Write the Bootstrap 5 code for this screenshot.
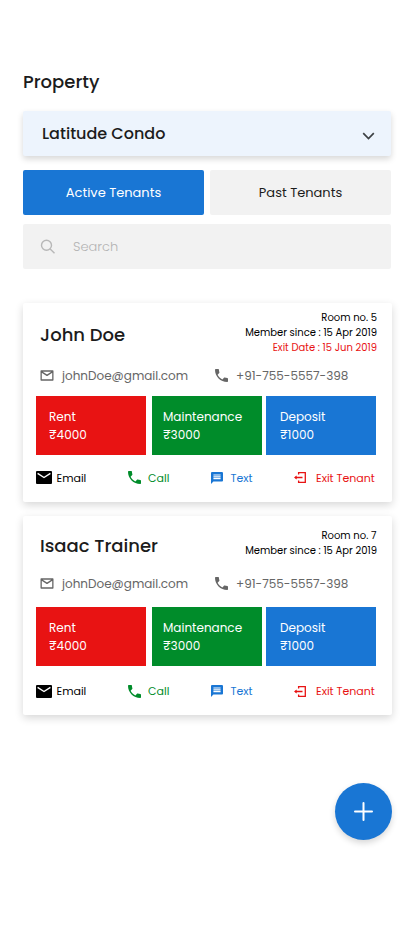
<!DOCTYPE html>
<html lang="en">
<head>
<meta charset="utf-8">
<meta name="viewport" content="width=device-width, initial-scale=1">
<title>Property tenants</title>
<link href="https://cdn.jsdelivr.net/npm/bootstrap@5.3.0/dist/css/bootstrap.min.css" rel="stylesheet">
<style>
body{font-family:Poppins,Inter,"Open Sans",sans-serif;color:#1c1c1c;background:#fff;min-height:931px}
.page-wrap{padding:69px 22px 0 23px}
.page-title{font-size:18px;font-weight:500;line-height:26px;height:42px}
.select-box{width:368px;height:45px;padding:0 16px 0 19px;background:#edf4fd;border-radius:2px;box-shadow:0 3px 6px rgba(0,0,0,.16);font-size:16px;font-weight:500}
.tabs-row{width:368px;gap:6px;margin-top:14px}
.tab-btn{height:45px;width:181px;border-radius:2px;border:0;padding:0;background:#f2f2f2;color:#1c1c1c;font-size:13px}
.tab-btn.active{background:#1976d4;color:#fff}
.search-box{width:368px;height:45px;margin-top:9px;padding-left:17px;background:#f2f2f2;border-radius:2px;color:#b4b4b4;font-size:13px;font-weight:300;gap:17px}
.tenant{width:369px;height:199px;border:0;border-radius:2px;box-shadow:0 3px 8px rgba(0,0,0,.16)}
.tenant-first{margin-top:34px}
.tenant-next{margin-top:14px}
.tenant-head{height:61px;padding:7px 15px 0 17px}
.tenant-next .tenant-head{height:56px;padding-top:12px}
.tenant-name{font-size:18px;font-weight:500;line-height:26px;margin-top:12px}
.tenant-next .tenant-name{margin-top:5px}
.tenant-meta{font-size:10px;line-height:15px;color:#000}
.contact{height:24px;padding-left:17px;font-size:12px;color:#666}
.contact-mail{width:175px;gap:8px}
.contact-tel{gap:8px}
.tiles{margin-top:8px;padding-left:13px}
.tenant-next .tiles{margin-top:11px}
.tile{width:110px;height:59px;padding:12px 0 0 13px;color:#fff;font-size:12px;line-height:18px}
.tenant-next .contact{height:25px}
.tile-mid{margin:0 4px 0 6px;padding-left:11px}
.tile-end{padding-left:14px}
.red-bg{background:#e81313}.green-bg{background:#008c2a}.blue-bg{background:#1976d4}
.actions{height:46px;padding-left:13px;font-size:11px;color:#000}
.tenant-next .actions{height:49px;padding-top:2px}
.contact svg,.actions svg{margin-bottom:1px}
.act-mail{width:92px;gap:4.500px}
.act-call{width:83px;gap:7px}
.act-text{width:83px;gap:7.500px}
.act-exit{gap:10px}
.green{color:#008c2a}.blue{color:#1976d4}.red{color:#e81313}
.fab{width:57px;height:57px;margin:68px 0 0 312px;border-radius:50%;background:#1976d4;box-shadow:0 3px 6px rgba(0,0,0,.16)}
svg{display:block;flex:none}
</style>
<script src="https://cdn.jsdelivr.net/npm/bootstrap@5.3.0/dist/js/bootstrap.bundle.min.js"></script>
</head>
<body>
<svg width="0" height="0" class="position-absolute" aria-hidden="true">
<symbol id="mail" viewBox="0 0 14 11"><path fill="none" stroke="currentColor" stroke-width="1.300" stroke-linejoin="round" d="M1.150 1h11.700v9H1.150zM1.300 1.600 7 5.400l5.700-3.800"/></symbol>
<symbol id="mail-fill" viewBox="0 0 16 13"><rect width="16" height="13" rx="1" fill="currentColor"/><path d="M1.600 2.300 8 6.500l6.400-4.200" fill="none" stroke="#fff" stroke-width="1.400"/></symbol>
<symbol id="phone" viewBox="3 3 18 18"><path fill="currentColor" d="M6.620 10.790c1.440 2.830 3.760 5.140 6.590 6.590l2.200-2.200c.27-.27.67-.36 1.020-.24 1.120.37 2.330.57 3.570.57.55 0 1 .45 1 1V20c0 .55-.45 1-1 1-9.390 0-17-7.610-17-17 0-.55.45-1 1-1h3.500c.55 0 1 .45 1 1 0 1.250.2 2.450.57 3.570.11.35.03.74-.25 1.020l-2.200 2.200z"/></symbol>
<symbol id="chat" viewBox="2 2 20 20"><path fill="currentColor" d="M20 2H4c-1.100 0-2 .9-2 2v18l4-4h14c1.100 0 2-.9 2-2V4c0-1.100-.9-2-2-2zM6 9h12v2H6V9zm12 5H6v-2h12v2zm0-6H6V6h12v2z"/></symbol>
<symbol id="leave" viewBox="0 0 12 11"><path fill="none" stroke="currentColor" stroke-width="1.300" d="M4.600 2.600V.7h6.700v9.600H4.600V8.400M1 5.500h7.500"/><path fill="currentColor" d="M0 5.500 2.700 3.400v4.200z"/></symbol>
</svg>
<main class="page-wrap">
<h1 class="page-title mb-0">Property</h1>
<div class="select-box d-flex align-items-center justify-content-between">
<span>Latitude Condo</span>
<svg width="13" height="8" viewBox="0 0 13 8" class="mt-1"><path d="M1.200 1.200 6.500 6.500l5.300-5.300" fill="none" stroke="#3c4043" stroke-width="1.700"/></svg>
</div>
<div class="tabs-row d-flex">
<button type="button" class="tab-btn active">Active Tenants</button>
<button type="button" class="tab-btn">Past Tenants</button>
</div>
<div class="search-box d-flex align-items-center">
<svg width="16" height="16" viewBox="0 0 16 16"><g fill="none" stroke="#b8b8b8" stroke-width="1.400"><circle cx="6.500" cy="6.300" r="5"/><path d="m10.200 10 4.300 4.300"/></g></svg>
<span>Search</span>
</div>

<section class="card tenant tenant-first">
<div class="tenant-head d-flex justify-content-between">
<h2 class="tenant-name mb-0">John Doe</h2>
<div class="tenant-meta text-end"><div>Room no. 5</div><div>Member since : 15 Apr 2019</div><div class="red">Exit Date : 15 Jun 2019</div></div>
</div>
<div class="contact d-flex align-items-center">
<div class="contact-mail d-flex align-items-center"><svg width="14" height="11"><use href="#mail"/></svg><span>johnDoe@gmail.com</span></div>
<div class="contact-tel d-flex align-items-center"><svg width="13" height="13"><use href="#phone"/></svg><span>+91-755-5557-398</span></div>
</div>
<div class="tiles d-flex">
<div class="tile red-bg"><div>Rent</div><div>₹4000</div></div>
<div class="tile tile-mid green-bg"><div>Maintenance</div><div>₹3000</div></div>
<div class="tile tile-end blue-bg"><div>Deposit</div><div>₹1000</div></div>
</div>
<div class="actions d-flex align-items-center">
<div class="act-mail d-flex align-items-center"><svg width="16" height="13"><use href="#mail-fill"/></svg><span>Email</span></div>
<div class="act-call green d-flex align-items-center"><svg width="13" height="13"><use href="#phone"/></svg><span>Call</span></div>
<div class="act-text blue d-flex align-items-center"><svg width="12" height="12"><use href="#chat"/></svg><span>Text</span></div>
<div class="act-exit red d-flex align-items-center"><svg width="12" height="11"><use href="#leave"/></svg><span>Exit Tenant</span></div>
</div>
</section>

<section class="card tenant tenant-next">
<div class="tenant-head d-flex justify-content-between">
<h2 class="tenant-name mb-0">Isaac Trainer</h2>
<div class="tenant-meta text-end"><div>Room no. 7&#8202;</div><div>Member since : 15 Apr 2019</div></div>
</div>
<div class="contact d-flex align-items-center">
<div class="contact-mail d-flex align-items-center"><svg width="14" height="11"><use href="#mail"/></svg><span>johnDoe@gmail.com</span></div>
<div class="contact-tel d-flex align-items-center"><svg width="13" height="13"><use href="#phone"/></svg><span>+91-755-5557-398</span></div>
</div>
<div class="tiles d-flex">
<div class="tile red-bg"><div>Rent</div><div>₹4000</div></div>
<div class="tile tile-mid green-bg"><div>Maintenance</div><div>₹3000</div></div>
<div class="tile tile-end blue-bg"><div>Deposit</div><div>₹1000</div></div>
</div>
<div class="actions d-flex align-items-center">
<div class="act-mail d-flex align-items-center"><svg width="16" height="13"><use href="#mail-fill"/></svg><span>Email</span></div>
<div class="act-call green d-flex align-items-center"><svg width="13" height="13"><use href="#phone"/></svg><span>Call</span></div>
<div class="act-text blue d-flex align-items-center"><svg width="12" height="12"><use href="#chat"/></svg><span>Text</span></div>
<div class="act-exit red d-flex align-items-center"><svg width="12" height="11"><use href="#leave"/></svg><span>Exit Tenant</span></div>
</div>
</section>

<button type="button" class="fab border-0 p-0 d-flex align-items-center justify-content-center" aria-label="Add">
<svg width="19" height="19" viewBox="0 0 19 19"><path d="M9.500 1v17M1 9.500h17" stroke="#fff" stroke-width="2" stroke-linecap="round"/></svg>
</button>
</main>
</body>
</html>
